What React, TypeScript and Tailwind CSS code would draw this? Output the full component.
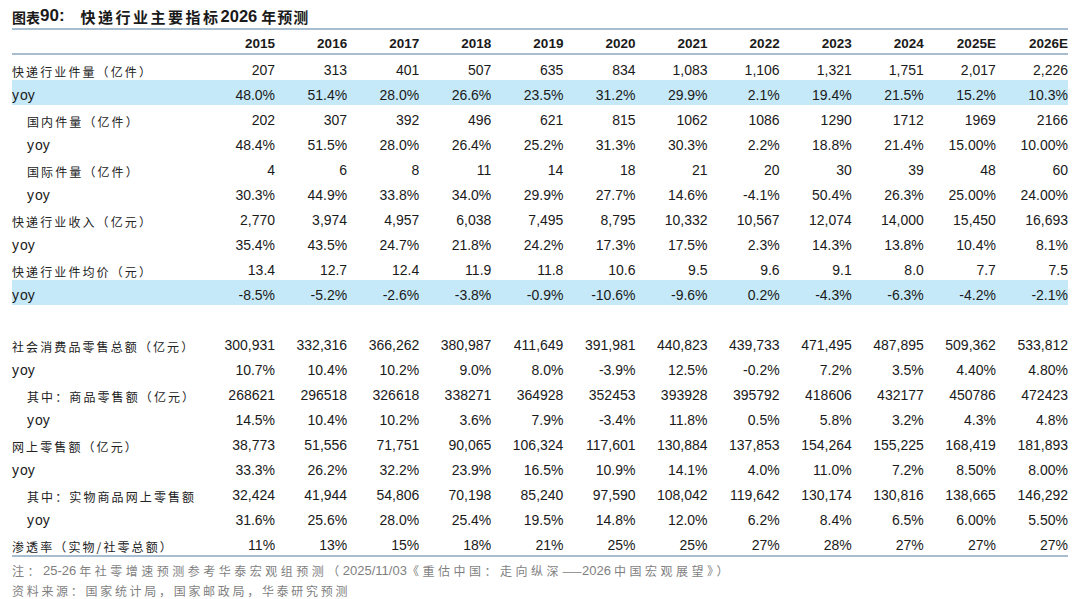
import React from "react";

const years = ["2015","2016","2017","2018","2019","2020","2021","2022","2023","2024","2025E","2026E"];

type Row = { label: string; vals?: string[]; indent?: boolean; hl?: boolean; yoy?: boolean; blank?: boolean };

const rows: Row[] = [
  { label: "快递行业件量（亿件）", vals: ["207","313","401","507","635","834","1,083","1,106","1,321","1,751","2,017","2,226"] },
  { label: "yoy", yoy: true, hl: true, vals: ["48.0%","51.4%","28.0%","26.6%","23.5%","31.2%","29.9%","2.1%","19.4%","21.5%","15.2%","10.3%"] },
  { label: "国内件量（亿件）", indent: true, vals: ["202","307","392","496","621","815","1062","1086","1290","1712","1969","2166"] },
  { label: "yoy", yoy: true, indent: true, vals: ["48.4%","51.5%","28.0%","26.4%","25.2%","31.3%","30.3%","2.2%","18.8%","21.4%","15.00%","10.00%"] },
  { label: "国际件量（亿件）", indent: true, vals: ["4","6","8","11","14","18","21","20","30","39","48","60"] },
  { label: "yoy", yoy: true, indent: true, vals: ["30.3%","44.9%","33.8%","34.0%","29.9%","27.7%","14.6%","-4.1%","50.4%","26.3%","25.00%","24.00%"] },
  { label: "快递行业收入（亿元）", vals: ["2,770","3,974","4,957","6,038","7,495","8,795","10,332","10,567","12,074","14,000","15,450","16,693"] },
  { label: "yoy", yoy: true, vals: ["35.4%","43.5%","24.7%","21.8%","24.2%","17.3%","17.5%","2.3%","14.3%","13.8%","10.4%","8.1%"] },
  { label: "快递行业件均价（元）", vals: ["13.4","12.7","12.4","11.9","11.8","10.6","9.5","9.6","9.1","8.0","7.7","7.5"] },
  { label: "yoy", yoy: true, hl: true, vals: ["-8.5%","-5.2%","-2.6%","-3.8%","-0.9%","-10.6%","-9.6%","0.2%","-4.3%","-6.3%","-4.2%","-2.1%"] },
  { label: "", blank: true },
  { label: "社会消费品零售总额（亿元）", vals: ["300,931","332,316","366,262","380,987","411,649","391,981","440,823","439,733","471,495","487,895","509,362","533,812"] },
  { label: "yoy", yoy: true, vals: ["10.7%","10.4%","10.2%","9.0%","8.0%","-3.9%","12.5%","-0.2%","7.2%","3.5%","4.40%","4.80%"] },
  { label: "其中：商品零售额（亿元）", indent: true, vals: ["268621","296518","326618","338271","364928","352453","393928","395792","418606","432177","450786","472423"] },
  { label: "yoy", yoy: true, indent: true, vals: ["14.5%","10.4%","10.2%","3.6%","7.9%","-3.4%","11.8%","0.5%","5.8%","3.2%","4.3%","4.8%"] },
  { label: "网上零售额（亿元）", vals: ["38,773","51,556","71,751","90,065","106,324","117,601","130,884","137,853","154,264","155,225","168,419","181,893"] },
  { label: "yoy", yoy: true, vals: ["33.3%","26.2%","32.2%","23.9%","16.5%","10.9%","14.1%","4.0%","11.0%","7.2%","8.50%","8.00%"] },
  { label: "其中：实物商品网上零售额", indent: true, vals: ["32,424","41,944","54,806","70,198","85,240","97,590","108,042","119,642","130,174","130,816","138,665","146,292"] },
  { label: "yoy", yoy: true, indent: true, vals: ["31.6%","25.6%","28.0%","25.4%","19.5%","14.8%","12.0%","6.2%","8.4%","6.5%","6.00%","5.50%"] },
  { label: "渗透率（实物/社零总额）", vals: ["11%","13%","15%","18%","21%","25%","25%","27%","28%","27%","27%","27%"] },
];

const num = "font-['Liberation_Sans',Arial,sans-serif]";
const cjk = "font-['Noto_Sans_CJK_SC',sans-serif]";

export default function App() {
  return (
    <div className="w-[1080px] h-[599px] bg-white px-[12px] text-[#1a1a1a] overflow-hidden">
      <div className="h-[28px] flex items-end pb-[4px] whitespace-nowrap">
        <span className={`${cjk} font-bold text-[14px] leading-none`}>图表</span>
        <span className={`${num} font-bold text-[17px] leading-none`}>90:</span>
        <span className={`${cjk} font-bold text-[15px] leading-none ml-[16px] tracking-[2.5px]`}>快递行业主要指标</span>
        <span className={`${num} font-bold text-[16.5px] leading-none`}>2026</span>
        <span className={`${cjk} font-bold text-[15px] leading-none ml-[4px] tracking-[1px]`}>年预测</span>
      </div>
      <div className="border-t-2 border-b-2 border-[#a9bdd1] grid grid-cols-[191px_repeat(12,1fr)] h-[27px]">
        <div />
        {years.map((y) => (
          <div key={y} className={`${num} font-bold text-[13.5px] flex items-end justify-end pb-[3px] leading-none`}>{y}</div>
        ))}
      </div>
      <div className="border-b-2 border-[#a9bdd1]">
        {rows.map((r, i) => (
          <div key={i} className={`grid grid-cols-[191px_repeat(12,1fr)] h-[25px] ${r.hl ? "bg-[#c5e9f8]" : ""}`}>
            {r.blank ? null : (
              <>
                <div className={`flex items-end pb-[2px] ${r.indent ? "pl-[15px]" : ""}`}>
                  {r.yoy ? (
                    <span className={`${num} text-[14px] leading-none pb-[1px]`}>y<span className="ml-[1px]">oy</span></span>
                  ) : (
                    <span className={`${cjk} text-[12px] leading-none tracking-[2.1px] text-[#222] whitespace-nowrap`}>{r.label}</span>
                  )}
                </div>
                {r.vals!.map((v, j) => (
                  <div key={j} className={`${num} text-[14px] leading-none flex items-end justify-end pb-[3px]`}>{v}</div>
                ))}
              </>
            )}
          </div>
        ))}
      </div>
      <div className={`${cjk} text-[12px] text-[#7f7f7f] h-[20px] flex items-end tracking-[3.5px] leading-none whitespace-nowrap`}>
        注：<span className={`${num} tracking-normal text-[13px] mr-[3px]`}>25-26</span>年社零增速预测参考华泰宏观组预测（<span className={`${num} tracking-normal text-[13px]`}>2025/11/03</span>《重估中国：走向纵深<span className="tracking-normal">——</span><span className={`${num} tracking-normal text-[13px] mr-[3px]`}>2026</span>中国宏观展望》）
      </div>
      <div className={`${cjk} text-[12px] text-[#7f7f7f] h-[22px] flex items-end pb-[2px] tracking-[2.7px] leading-none whitespace-nowrap`}>
        资料来源：国家统计局，国家邮政局，华泰研究预测
      </div>
    </div>
  );
}
